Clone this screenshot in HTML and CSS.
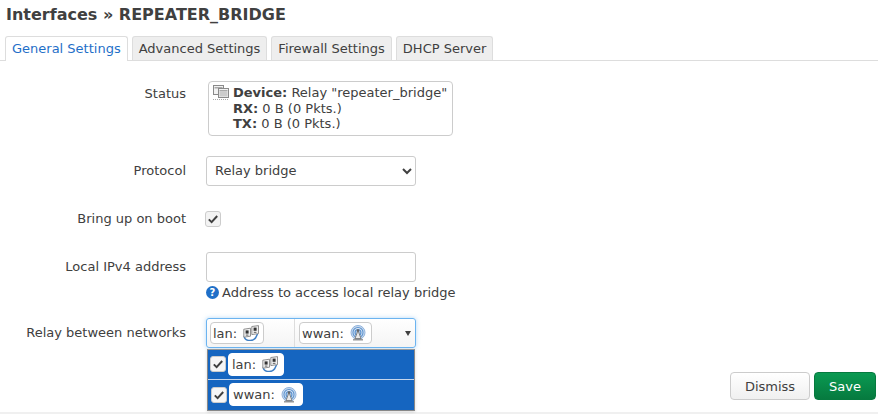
FILE: index.html
```html
<!DOCTYPE html>
<html lang="en">
<head>
<meta charset="utf-8">
<title>Interfaces » REPEATER_BRIDGE</title>
<link rel="stylesheet" href="styles.css">
</head>
<body>
<svg class="defs" width="0" height="0" aria-hidden="true">
  <symbol id="i-switch" viewBox="0 0 16 16">
    <path d="M1.500 11c-1 5 8 6 11 2l2-4" fill="none" stroke="#3f7fc4" stroke-width="1.500"/>
    <path d="M.8 4.200 7.500 3.200v8L.8 12.200z" fill="#f0f0f0" stroke="#777" stroke-width=".8"/>
    <rect x="2.600" y="5.400" width="3" height="3.200" fill="#333"/>
    <rect x="2.800" y="9.500" width="2.600" height="1.200" fill="#777"/>
    <path d="M8.800 1.500 15.500.6v8l-6.700 1z" fill="#f0f0f0" stroke="#777" stroke-width=".8"/>
    <rect x="10.600" y="2.600" width="3" height="3.200" fill="#333"/>
    <rect x="10.800" y="6.800" width="2.600" height="1.200" fill="#777"/>
  </symbol>
  <symbol id="i-wifi" viewBox="0 0 16 16">
    <circle cx="8" cy="7.500" r="7" fill="#c9daee" stroke="#8fb2dc" stroke-width="1"/>
    <circle cx="8" cy="7.500" r="5" fill="#dfe9f5" stroke="#5b93d0" stroke-width="1.100"/>
    <circle cx="8" cy="7.500" r="3" fill="#a9c5e6" stroke="#5b93d0" stroke-width="1.100"/>
    <path d="M8 5.500 5 13.500h6z" fill="#e8e8e8" stroke="#7a7a7a" stroke-width=".9"/>
    <circle cx="8" cy="5.500" r="1.300" fill="#666"/>
    <path d="M3 14.800h10" stroke="#8a8a8a" stroke-width="1.300"/>
  </symbol>
  <symbol id="i-check" viewBox="0 0 12 12">
    <path d="M1.800 6.400 4.600 9.100 10.200 3" fill="none" stroke="#404040" stroke-width="2"/>
  </symbol>
</svg>

<main class="page">
  <h2 class="title">Interfaces » REPEATER_BRIDGE</h2>

  <ul class="tabs">
    <li class="tab tab-active">General Settings</li>
    <li class="tab">Advanced Settings</li>
    <li class="tab">Firewall Settings</li>
    <li class="tab">DHCP Server</li>
  </ul>

  <form class="form">
    <div class="row row-status">
      <span class="label label-status">Status</span>
      <div class="status-box">
        <svg class="status-icon" viewBox="0 0 16 16" aria-hidden="true">
          <rect x="0.500" y="0.500" width="10" height="9" fill="#f2f2f2" stroke="#8a8a8a"/>
          <rect x="1.500" y="2" width="8" height="1.500" fill="#aaa"/>
          <rect x="5.500" y="3.500" width="10" height="9" fill="#f2f2f2" stroke="#8a8a8a"/>
          <rect x="6.500" y="5" width="8" height="1.500" fill="#aaa"/>
          <rect x="6.500" y="7" width="8" height="4.500" fill="#ccc"/>
          <path d="M0 14.500h16" stroke="#aaa" stroke-dasharray="1 1"/>
        </svg>
        <div class="status-text">
          <div><b>Device:</b> Relay "repeater_bridge"</div>
          <div><b>RX:</b> 0 B (0 Pkts.)</div>
          <div><b>TX:</b> 0 B (0 Pkts.)</div>
        </div>
      </div>
    </div>

    <div class="row row-protocol">
      <label class="label label-mid" for="proto">Protocol</label>
      <select class="select" id="proto">
        <option>Relay bridge</option>
      </select>
    </div>

    <div class="row row-boot">
      <span class="label label-boot">Bring up on boot</span>
      <span class="check check-boot"><svg viewBox="0 0 12 12"><use href="#i-check"/></svg></span>
    </div>

    <div class="row row-ip">
      <label class="label label-mid" for="ip">Local IPv4 address</label>
      <div class="field">
        <input class="input" id="ip" type="text">
        <div class="help"><span class="help-mark">?</span><span>Address to access local relay bridge</span></div>
      </div>
    </div>

    <div class="row row-relay">
      <span class="label label-mid">Relay between networks</span>
      <div class="combo">
        <div class="combo-head">
          <div class="combo-cell combo-cell-lan">
            <span class="badge">lan: <svg class="net"><use href="#i-switch"/></svg></span>
          </div>
          <div class="combo-cell combo-cell-wwan">
            <span class="badge badge-wwan">wwan: <svg class="net"><use href="#i-wifi"/></svg></span>
          </div>
          <span class="combo-arrow"></span>
        </div>
        <ul class="combo-list">
          <li class="combo-item">
            <span class="check check-list"><svg viewBox="0 0 12 12"><use href="#i-check"/></svg></span>
            <span class="badge badge-list">lan: <svg class="net"><use href="#i-switch"/></svg></span>
          </li>
          <li class="combo-item combo-item-last">
            <span class="check check-list"><svg viewBox="0 0 12 12"><use href="#i-check"/></svg></span>
            <span class="badge badge-list">wwan: <svg class="net"><use href="#i-wifi"/></svg></span>
          </li>
        </ul>
      </div>
    </div>
  </form>

  <footer class="actions">
    <button class="btn btn-plain" type="button">Dismiss</button>
    <button class="btn btn-save" type="button">Save</button>
  </footer>
</main>
</body>
</html>
```

FILE: styles.css
```css
* { box-sizing: border-box; }

html, body {
  margin: 0;
  height: 100%;
  overflow: hidden;
  background: #fff;
}

body {
  font-family: "DejaVu Sans", sans-serif;
  font-size: 13px;
  line-height: 15px;
  color: #404040;
}

.defs { position: absolute; }

.page {
  width: 878px;
  height: 414px;
  border-bottom: 2px solid #f0f0f0;
}

.title {
  margin: 0;
  padding: 5px 0 0 6px;
  height: 36px;
  font-size: 16px;
  line-height: 19px;
  font-weight: bold;
  color: #404040;
}

.tabs {
  display: flex;
  gap: 4px;
  margin: 0;
  padding: 0 0 0 5px;
  height: 25px;
  list-style: none;
  border-bottom: 1px solid #ddd;
}

.tab {
  height: 24px;
  padding: 4px 6px 0;
  color: #404040;
  background: #eee;
  border: 1px solid #ddd;
  border-bottom: 0;
  border-radius: 3px 3px 0 0;
}

.tab-active {
  height: 25px;
  padding: 4px 6px 0;
  color: #1f6fc8;
  background: #fff;
}

.form { height: 311px; }

.row {
  display: flex;
  align-items: flex-start;
}

.label {
  flex: none;
  width: 186px;
  text-align: right;
}

.row-status { padding: 20px 0 0; }
.row-status .label { padding-top: 5px; margin-right: 22px; }

.status-box {
  display: flex;
  width: 245px;
  height: 55px;
  padding: 3px 4px 0 4px;
  border: 1px solid #ccc;
  border-radius: 4px;
}

.status-icon {
  flex: none;
  width: 16px;
  height: 16px;
  margin-right: 4px;
}

.status-text { line-height: 15.5px; }

.row-protocol { padding-top: 20px; }
.label-mid { padding-top: 7px; margin-right: 20px; }

.select {
  width: 210px;
  height: 30px;
  padding: 0 4px 2px;
  font: 13px "DejaVu Sans", sans-serif;
  color: #404040;
  background: #fff;
  border: 1px solid #ccc;
  border-radius: 3px;
}

.row-boot { padding-top: 25px; }
.label-boot { margin-right: 19px; }

.check {
  display: flex;
  align-items: center;
  justify-content: center;
  flex: none;
  width: 16px;
  height: 16px;
  background: #f3f3f3;
  border: 1px solid #ccc;
  border-radius: 3px;
}

.check svg { width: 12px; height: 12px; }

.row-ip { padding-top: 25px; }

.input {
  display: block;
  width: 210px;
  height: 30px;
  background: #fff;
  border: 1px solid #ccc;
  border-radius: 3px;
}

.help {
  display: flex;
  align-items: center;
  gap: 3px;
  margin-top: 3px;
  white-space: nowrap;
}

.help-mark {
  display: block;
  width: 13px;
  height: 13px;
  font-size: 10px;
  line-height: 13px;
  font-weight: bold;
  text-align: center;
  color: #fff;
  background: #1f6fc8;
  border-radius: 50%;
}

.row-relay { padding-top: 18px; }

.combo {
  position: relative;
  width: 210px;
  height: 30px;
}

.combo-head {
  display: flex;
  align-items: center;
  position: relative;
  height: 30px;
  background: linear-gradient(#fff, #f4f4f4);
  border: 1px solid #6cb4f0;
  border-radius: 3px;
  box-shadow: 0 0 4px rgba(108, 180, 240, .5);
}

.combo-cell {
  display: flex;
  align-items: center;
  height: 100%;
}

.combo-cell-lan {
  width: 88px;
  padding-left: 3px;
  border-right: 1px solid #ddd;
}

.combo-cell-wwan { padding-left: 4px; }

.combo-arrow {
  position: absolute;
  right: 4px;
  top: 12px;
  width: 0;
  height: 0;
  border-left: 3px solid transparent;
  border-right: 3px solid transparent;
  border-top: 5px solid #404040;
}

.badge {
  display: inline-flex;
  align-items: center;
  gap: 6px;
  height: 22px;
  padding: 0 4px 0 2px;
  white-space: nowrap;
  background: #fff;
  border: 1px solid #ccc;
  border-radius: 4px;
}

.badge-wwan { padding-right: 5px; }

.net {
  flex: none;
  width: 16px;
  height: 16px;
}

.combo-list {
  position: absolute;
  left: 1px;
  top: 31px;
  width: 208px;
  margin: 0;
  padding: 0;
  list-style: none;
  background: #1565c0;
  border: 1px solid #888;
  border-top-color: #999;
  box-shadow: 0 1px 3px rgba(0, 0, 0, .15);
}

.combo-item {
  display: flex;
  align-items: center;
  gap: 2px;
  height: 30px;
  padding: 0 0 1px 2px;
  border-bottom: 1px solid #c5d6ec;
}

.combo-item-last {
  padding: 0 0 1px 3px;
  border-bottom: 0;
}

.check-list { background: #f6f6f6; }

.badge-list {
  height: 23px;
  padding: 0 5px 0 3px;
  gap: 6px;
  border-color: #fff;
}

.actions {
  display: flex;
  justify-content: flex-end;
  gap: 4px;
  padding-right: 2px;
}

.btn {
  height: 28px;
  font: 13px "DejaVu Sans", sans-serif;
  border-radius: 4px;
  padding: 0;
}

.btn-plain {
  width: 80px;
  color: #404040;
  background: linear-gradient(#fff, #f0f0f0);
  border: 1px solid #ccc;
}

.btn-save {
  width: 62px;
  color: #fff;
  background: linear-gradient(#0a9a52, #067a3f);
  border: 1px solid #067a3f;
}
```
